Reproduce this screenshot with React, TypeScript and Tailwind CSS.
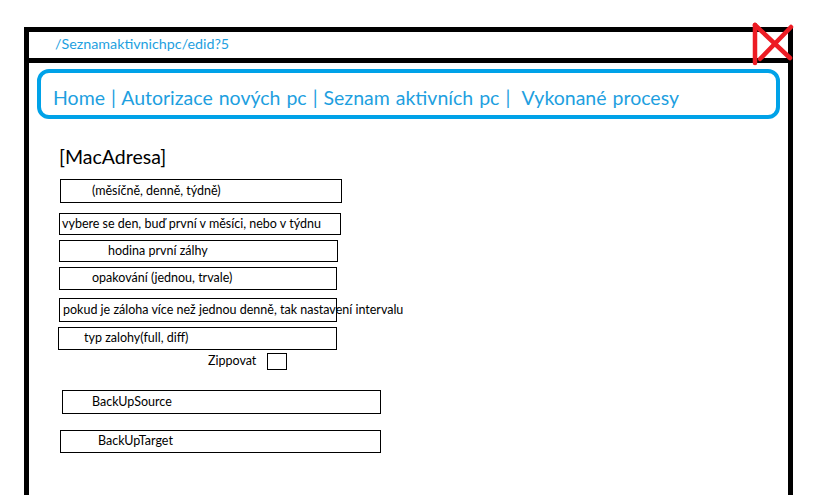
import React from "react";

const small = "text-[12.5px] leading-none text-black whitespace-nowrap";

function Box({
  ml,
  w,
  h,
  mt,
  pl,
  children,
}: {
  ml: number;
  w: number;
  h: number;
  mt: number;
  pl: number;
  children: React.ReactNode;
}) {
  return (
    <div
      className={`flex items-center border border-black ${small}`}
      style={{ marginLeft: ml, width: w, height: h, marginTop: mt, paddingLeft: pl }}
    >
      {children}
    </div>
  );
}

export default function App() {
  return (
    <div
      className="w-[814px] h-[495px] bg-white overflow-hidden pt-[27px] pl-[24px]"
      style={{ fontFamily: "Lato, 'Open Sans', sans-serif" }}
    >
      <div className="relative w-[769px] h-[468px] border-[5px] border-b-0 border-black flex flex-col">
        <div className="h-[31px] border-b-[5px] border-black flex items-center pl-[26px] pb-[3px] text-[14.3px] text-[#1e9fe0]">
          /Seznamaktivnichpc/edid?5
        </div>
        <svg
          className="absolute left-[721px] top-[-10px]"
          width="45"
          height="45"
          viewBox="0 0 45 45"
        >
          <g stroke="#ed1c24" strokeWidth="4.5" strokeLinecap="round" fill="none">
            <path d="M5 3 L5 41" />
            <path d="M5 3 L40 36" />
            <path d="M41 5 L10 37" />
          </g>
        </svg>
        <div className="ml-[8px] mt-[6px] w-[743px] h-[50px] border-4 border-[#00a2e8] rounded-[12px] flex items-center pl-[12px] pt-[7px] text-[19.5px] [word-spacing:1px] text-[#1e9fe0] whitespace-pre">
          Home | Autorizace nových pc | Seznam aktivních pc |  Vykonané procesy
        </div>
        <div className="ml-[30px] mt-[26px] h-[24px] flex items-center text-[19.5px] text-black">
          [MacAdresa]
        </div>
        <Box ml={31} w={282} h={24} mt={10} pl={31}>(měsíčně, denně, týdně)</Box>
        <Box ml={30} w={282} h={22} mt={10} pl={2}>vybere se den, buď první v měsíci, nebo v týdnu</Box>
        <Box ml={30} w={279} h={22} mt={5} pl={48}>hodina první zálhy</Box>
        <Box ml={30} w={278} h={23} mt={5} pl={32}>opakování (jednou, trvale)</Box>
        <Box ml={30} w={278} h={24} mt={8} pl={3}>pokud je záloha více než jednou denně, tak nastavení intervalu</Box>
        <Box ml={29} w={279} h={23} mt={5} pl={25}>typ zalohy(full, diff)</Box>
        <div className="mt-[3px] ml-[179px] h-[17px] flex items-center">
          <span className={small}>Zippovat</span>
          <div className="ml-[11px] w-[20px] h-[17px] border border-black" />
        </div>
        <Box ml={33} w={319} h={24} mt={20} pl={29}>BackUpSource</Box>
        <Box ml={31} w={321} h={23} mt={16} pl={37}>BackUpTarget</Box>
      </div>
    </div>
  );
}
